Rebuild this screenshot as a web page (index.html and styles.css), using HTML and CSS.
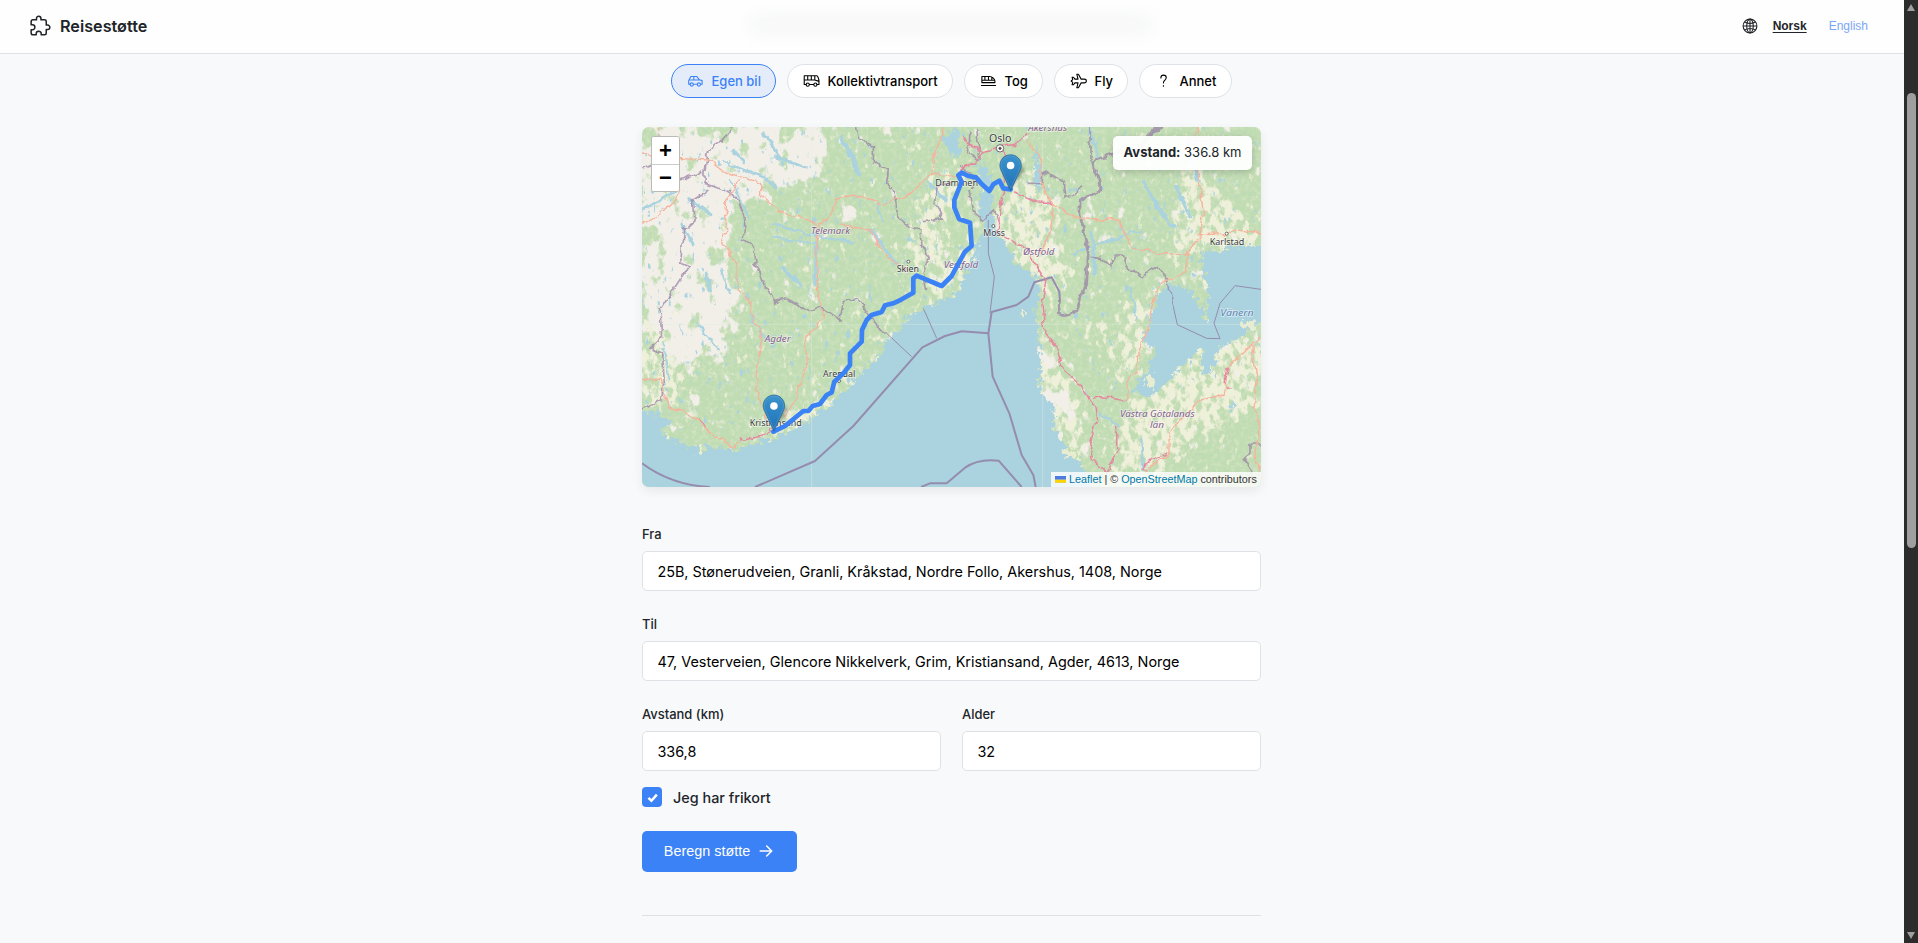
FILE: index.html
```html
<!DOCTYPE html>
<html lang="no">
<head>
<meta charset="utf-8">
<title>Reisestøtte</title>
<link rel="stylesheet" href="styles.css">
</head>
<body>
<div class="page">
  <header class="header">
    <div class="header-haze"></div>
    <div class="brand">
      <svg class="brand-icon" viewBox="0 0 512 512"><path d="M413.66 246.1H386a2 2 0 01-2-2v-77.24A38.86 38.86 0 00345.14 128H267.9a2 2 0 01-2-2V98.34c0-27.14-21.5-49.86-48.64-50.33a49.53 49.53 0 00-50.4 49.51V126a2 2 0 01-2 2H87.62A39.74 39.74 0 0048 167.62V238a2 2 0 002 2h26.91c29.37 0 53.68 25.48 54.09 54.85.42 29.87-23.51 57.15-53.29 57.15H50a2 2 0 00-2 2v70.38A39.74 39.74 0 0087.62 464H158a2 2 0 002-2v-20.93c0-30.28 24.75-56.35 55-57.06 30.1-.7 57 20.31 57 50.28V462a2 2 0 002 2h71.14A38.86 38.86 0 00384 425.14v-78a2 2 0 012-2h28.48c27.63 0 49.52-22.67 49.52-50.4s-23.2-48.64-50.34-48.64z"/></svg>
      <span class="brand-name">Reisestøtte</span>
    </div>
    <nav class="languages">
      <svg class="globe" viewBox="0 0 16 16"><circle cx="8" cy="8" r="6.9"/><ellipse cx="8" cy="8" rx="3.3" ry="6.9"/><path d="M8 1v14M1 8h14M2.6 4.1c3 1.6 7.800 1.600 10.800 0M2.600 11.900c3-1.600 7.800-1.600 10.800 0"/></svg>
      <a class="lang lang-active">Norsk</a>
      <a class="lang">English</a>
    </nav>
  </header>

  <main class="content">
    <div class="chips">
      <button class="chip chip-active"><svg class="chip-icon" viewBox="0 0 18 16"><path d="M3.200 11.500H1.800V7.800L4 3.200h6.200l3 3.500 2.800.9v3.900h-1.600M6.800 11.500h4M2 7h11M7.200 3.200V7"/><circle cx="5" cy="11.700" r="1.700"/><circle cx="12.600" cy="11.700" r="1.700"/></svg>Egen bil</button>
      <button class="chip chip-bus"><svg class="chip-icon" viewBox="0 0 18 16"><path d="M3.200 11.700H1.300V2.500h13.300c1 0 2.300 3.600 2.300 5.500v3.700h-2M6.800 11.700h4.500M1.300 7h11.200M5 2.500V7M8.800 2.500V7M12.500 2.500V7l4.300 1.400"/><circle cx="5" cy="11.900" r="1.700"/><circle cx="13.100" cy="11.900" r="1.700"/></svg>Kollektivtransport</button>
      <button class="chip chip-train"><svg class="chip-icon" viewBox="0 0 18 16"><path d="M2 3.200h8.200c3 0 5.600 2.800 5.600 5v1.500H2M2 3.200v4h12.500M2 9.700V7.200M1.500 12.800h15M5.200 3.200v4M9 3.200v4M12.500 4v3"/></svg>Tog</button>
      <button class="chip chip-plane"><svg class="chip-icon" viewBox="0 0 18 16"><path d="M7.200.8h1.700l2.900 5.200h3.200c1.500 0 2.300.9 2.300 2s-.8 2-2.300 2h-3.200l-2.900 5.200H7.200L8.500 10H5.200l-1.500 2H2.200l.7-2.600L1.200 8l1.700-1.400L2.200 4h1.500l1.500 2h3.300z"/></svg>Fly</button>
      <button class="chip chip-other"><svg class="chip-icon" viewBox="0 0 18 16"><path d="M6.200 4.800C6.200 2.600 7.300 1.800 9 1.800s2.900 1.100 2.900 2.700c0 2.500-3 2.500-3 5.500M8.900 12.900v.6"/></svg>Annet</button>
    </div>

    <section class="map">
      <svg class="map-canvas" viewBox="6 21 1857 1080" preserveAspectRatio="none">
        <defs>
          <filter id="bare" x="0" y="0" width="1900" height="1120" filterUnits="userSpaceOnUse" color-interpolation-filters="sRGB">
            <feGaussianBlur in="SourceAlpha" stdDeviation="32" result="area"/>
            <feTurbulence type="fractalNoise" baseFrequency=".022 .016" numOctaves="5" seed="7"/>
            <feColorMatrix values="0 0 0 0 0 0 0 0 0 0 0 0 0 0 0 1 0 0 0 0" result="noise"/>
            <feComposite in="noise" in2="area" operator="arithmetic" k2="1" k3=".4" k4="0"/>
            <feComponentTransfer result="mask"><feFuncA type="linear" slope="10" intercept="-7"/></feComponentTransfer>
            <feFlood flood-color="#f2efe9"/><feComposite in2="mask" operator="in"/>
          </filter>
          <filter id="fields" x="0" y="0" width="1900" height="1120" filterUnits="userSpaceOnUse" color-interpolation-filters="sRGB">
            <feGaussianBlur in="SourceAlpha" stdDeviation="22" result="area"/>
            <feTurbulence type="fractalNoise" baseFrequency=".045 .03" numOctaves="4" seed="21"/>
            <feColorMatrix values="0 0 0 0 0 0 0 0 0 0 0 0 0 0 0 1 0 0 0 0" result="noise"/>
            <feComposite in="noise" in2="area" operator="arithmetic" k2="1" k3=".3" k4="0"/>
            <feComponentTransfer result="mask"><feFuncA type="linear" slope="6" intercept="-3.950"/></feComponentTransfer>
            <feFlood flood-color="#eff0d9"/><feComposite in2="mask" operator="in"/>
          </filter>
          <filter id="ponds" x="0" y="0" width="1900" height="1120" filterUnits="userSpaceOnUse" color-interpolation-filters="sRGB">
            <feTurbulence type="fractalNoise" baseFrequency=".06 .035" numOctaves="3" seed="4"/>
            <feColorMatrix values="0 0 0 0 .667 0 0 0 0 .827 0 0 0 0 .875 9 0 0 0 -6.200"/>
            <feComposite in2="SourceAlpha" operator="in"/>
          </filter>
          <filter id="grain" x="0" y="0" width="1900" height="1120" filterUnits="userSpaceOnUse" color-interpolation-filters="sRGB">
            <feTurbulence type="fractalNoise" baseFrequency=".07" numOctaves="4" seed="12"/>
            <feColorMatrix values="0 0 0 0 .88 0 0 0 0 .91 0 0 0 0 .81 2.400 0 0 0 -1"/>
          </filter>
          <filter id="shore" x="-60" y="-60" width="2000" height="1240" filterUnits="userSpaceOnUse" color-interpolation-filters="sRGB">
            <feTurbulence type="fractalNoise" baseFrequency=".06" numOctaves="4" seed="9"/>
            <feDisplacementMap in="SourceGraphic" scale="42" xChannelSelector="R" yChannelSelector="G"/>
          </filter>
          <filter id="wobble" x="-60" y="-60" width="2000" height="1240" filterUnits="userSpaceOnUse" color-interpolation-filters="sRGB">
            <feTurbulence type="fractalNoise" baseFrequency=".035" numOctaves="3" seed="3"/>
            <feDisplacementMap in="SourceGraphic" scale="22" xChannelSelector="R" yChannelSelector="G"/>
          </filter>
          <filter id="soft"><feGaussianBlur stdDeviation="1.700"/></filter>
          <linearGradient id="pinFill" x1="0" y1="0" x2="0" y2="1"><stop offset="0" stop-color="#3b93cc"/><stop offset="1" stop-color="#1f72b8"/></linearGradient>
          <g id="pin">
            <path d="M12 39 25 22c4-4 3-9-2-9-5 1-8 12-11 26z" fill="#222" opacity=".32" filter="url(#soft)"/>
            <path d="M12.500.5C5.900.5.6 5.800.6 12.400c0 2.300.9 4.500 1.900 6.700l10 21.400 10-21.400c1-2.200 1.900-4.400 1.900-6.700C24.400 5.800 19.100.5 12.500.5z" fill="url(#pinFill)" stroke="#2e6c97" stroke-width=".9"/>
            <path d="M12.500 1.700C6.600 1.700 1.800 6.500 1.800 12.400c0 2 .9 4.200 1.800 6.200l8.900 19 8.900-19c.9-2 1.800-4.200 1.800-6.200 0-5.900-4.800-10.700-10.700-10.700z" fill="none" stroke="#fff" stroke-opacity=".13"/>
            <circle cx="12.500" cy="12.500" r="4.200" fill="#fff"/>
          </g>
        </defs>

        <rect width="1870" height="1110" fill="#bfdcb2"/>
        <rect width="1870" height="1110" filter="url(#grain)" opacity=".55"/>
        <g filter="url(#fields)">
          <path d="M985 380 1110 210 1180 130 1250 230 1240 350 1320 470 1210 540 1090 360 950 500 850 545 820 500z"/>
          <path d="M1640 60 1700 170 1790 270 1863 330 1863 400 1660 390 1560 470 1590 400z"/>
          <path d="M1200 590 1260 760 1340 870 1310 1060 1190 820z"/>
          <path d="M1500 820 1600 730 1700 680 1863 620 1863 860 1700 940 1500 1100 1400 1000z"/>
          <path d="M1700 400h80v240h-100zM1440 560l120-40-60 220-70 80z"/>
          <path d="M6 560h120l40 60-60 250-100-20zM1310 570l110 90-20 60zM380 900l200-70 90-90 110-160 30 10-160 240-250 160z"/>
          <path d="M800 420l50-200 80-90 30 40-60 280z"/>
        </g>
        <g filter="url(#bare)">
          <path d="M6 21h580l20 60-90 80 40 40-180 10-70 40-20 80-60 60 40 60-60 100-110 170-90-60z"/>
          <path d="M80 520l190-60 30 130-60 160-120-20-40-120z"/>
          <path d="M60 60h480v60H60zM590 260h70v40h-70z"/>
          <path d="M1195 600l50 190 80 30-70 150-70-180zM60 900h60v40H60z"/>
        </g>
        <rect width="1200" height="930" filter="url(#ponds)"/>
        <path d="M1160 21h703v800h-560z" filter="url(#ponds)"/>

        <g filter="url(#shore)" fill="#aad3df">
          <path d="M-40 865 75 885 95 905 55 940 100 960 175 985 185 1000 200 980 285 990 335 975 400 955 445 935 510 900 570 855 610 820 655 770 705 720 745 660 800 600 840 570 890 550 940 530 960 500 985 450 1005 400 1020 345 1040 325 1020 290 1018 240 1030 200 1010 140 1030 130 1050 160 1055 240 1060 300 1075 345 1110 390 1120 430 1180 460 1205 520 1180 570 1195 610 1195 660 1205 740 1200 820 1240 850 1240 920 1280 980 1330 1040 1370 1150H-40z"/>
          <path d="M1680 395 1740 390 1800 375 1900 375V600L1863 610 1800 650 1735 690 1715 755 1680 765 1690 680 1640 725 1570 795 1530 830 1475 815 1530 740 1550 690 1510 670 1520 620 1545 555 1565 520 1590 485 1650 510 1670 545 1705 610 1705 520z"/>
          <path d="M905 60 960 20V110L935 105zM1180 90 1210 150 1200 220 1185 200zM1785 830l-15 30 10 10z"/>
        </g>
        <g filter="url(#wobble)" fill="none" stroke="#aad3df" stroke-linecap="round">
          <path stroke-width="11" d="M375 45 425 120 500 140M605 50 660 165M405 110 460 130M380 180 410 200M280 90 310 125M1510 180 1550 260 1600 320M1610 200 1650 290M1655 100 1670 180M1350 25 1375 110M1355 340 1365 460M865 190 920 240M690 330 770 430M530 380 525 500M430 440 480 500M200 460 210 510M130 320 155 370M150 240 210 280"/>
          <path stroke-width="7" d="M400 310 520 345 640 370M395 355 530 370M710 250 730 300M245 125 380 175M6 270 105 210M1300 400 1500 330M1740 500 1750 610M1470 500 1490 600M70 690 90 780M330 590 400 680M170 610 240 690M1500 960 1510 1050M1380 880l60 40M270 180l60 120M240 450l30 70"/>
        </g>
        <g filter="url(#shore)" fill="#e8ecd0"><ellipse cx="1825" cy="615" rx="25" ry="12"/><ellipse cx="1150" cy="578" rx="5" ry="7"/><ellipse cx="1530" cy="785" rx="12" ry="20"/><ellipse cx="180" cy="992" rx="10" ry="16"/><ellipse cx="1290" cy="1000" rx="22" ry="15"/></g>

        <g stroke="#e4e9df" stroke-opacity=".65" stroke-width="2"><path d="M6 613H1863M515 21V1101M1208 21V1101"/></g>

        <g fill="none" stroke="#9b83a5" stroke-opacity=".75" stroke-width="5" filter="url(#wobble)">
          <path d="M275 21 265 45 240 60 205 95 195 150 195 190 265 215 295 240 315 300 310 360 340 380 345 430 375 500 405 545 440 535 510 575 540 560 600 600 610 545 650 530 680 575 700 600 720 630 740 640"/>
          <path d="M6 148 55 130 110 185 190 150M205 210 160 240 165 300 130 330 122 430 145 440 60 570 65 650 30 685 65 705 70 790 65 840 6 870"/>
          <path d="M650 21 655 55 700 80 700 125 745 150 740 190 760 210 775 290 810 325 845 330 845 380 865 410 850 460 860 510M845 305 910 300 885 250 895 200 930 190M960 140 1000 170 1000 210M990 210 1000 270 1030 300 1060 270 1075 300M990 40 985 100 1020 120 1010 30M1160 190 1205 190 1210 155 1270 190 1275 235 1330 200"/>
          <path stroke-width="8" d="M1570 21 1540 30 1490 95 1430 100 1355 125 1375 170 1380 210 1320 240 1320 280 1335 350 1345 400 1340 490 1320 540 1310 575 1280 585 1258 575 1258 540"/>
          <path d="M1350 21v100M1350 412 1385 415 1415 440 1420 405 1450 405 1460 435 1505 470 1550 440 1580 470 1600 560"/>
          <path d="M1863 972 1830 972 1830 1000 1810 1015 1835 1050 1830 1085"/>
        </g>
        <g fill="none" stroke="#958cae" stroke-width="6" stroke-linejoin="round">
          <path d="M6 1030C60 1070 130 1098 210 1101M345 1101 525 1023 640 918 847 682 915 648 965 634 1045 640 1055 576 1130 555 1165 530 1183 487 1235 472 1258 515 1260 545"/>
          <path d="M1045 640 1058 770 1108 880 1145 1005 1180 1065 1187 1101M843 1101 870 1090 920 1090 975 1043Q1015 1015 1076 1022L1145 1101"/>
          <path stroke-width="3" d="M850 565 890 655M740 640 815 710M1050 580 1063 470 1045 400 1045 300M1600 560 1612 614 1700 655 1740 656 1722 610 1740 550 1785 497 1863 508"/>
        </g>

        <g fill="none" stroke="#f6b39c" stroke-width="4" stroke-linejoin="round" filter="url(#wobble)">
          <path d="M6 105 110 115 205 120 250 155 300 170 365 190 365 225 410 265 455 290 510 300 530 320 570 290 590 240 640 225 700 245 720 255 770 235 810 225 850 185 875 160 880 120 895 65 910 21"/>
          <path d="M875 160 950 170M600 315 690 330 730 400 805 460M535 320 530 400 535 450 535 530 550 590 495 660 505 720 470 830 430 900M300 175 270 225 255 260 260 330 245 370 290 430 295 510 325 540 330 580 365 640 355 700 350 810 370 860 380 920M6 310 60 285 105 240 120 205M6 778 60 775 85 860 120 870 165 895 210 940 280 980 300 965"/>
          <path d="M1235 250 1300 290 1350 295 1430 300 1460 350 1480 385 1560 400 1635 405 1680 350 1690 280 1680 200 1665 100 1670 21M1680 345 1760 340 1800 325 1863 342M1640 400 1640 455 1560 490 1535 560 1520 640 1495 690 1490 750 1460 780 1465 840M1160 60 1205 120 1200 180 1240 260 1230 340 1200 400M1510 1050 1590 1000 1590 940 1650 870 1680 840 1750 825 1765 740 1863 650M1835 680 1850 770 1840 850 1860 920 1845 1010 1863 1080M55 21v90"/>
        </g>
        <g fill="none" stroke="#e588a0" stroke-width="4.500" stroke-linejoin="round" filter="url(#wobble)">
          <path d="M965 155 975 135 1010 125 1030 95 985 75 970 50M1030 95 1075 85 1125 75 1165 40M1090 90 1090 215 1070 340 1110 355 1160 390 1215 480 1205 540 1215 640 1250 680 1265 740 1310 780 1365 860 1370 900 1350 960 1360 1020 1400 1060 1430 1000 1430 920M1120 215 1200 250 1240 250M1360 830 1390 830 1440 840 1460 838M1510 1050 1515 1030 1580 1000M1755 810 1775 810M1755 790 1765 740M300 960 370 945 400 925M175 900 195 920"/>
        </g>

        <g class="place">
          <text x="1047" y="65" textLength="67" lengthAdjust="spacingAndGlyphs" font-size="32">Oslo</text>
          <text x="886" y="197" textLength="128" lengthAdjust="spacingAndGlyphs">Drammen</text>
          <text x="1030" y="347" textLength="65" lengthAdjust="spacingAndGlyphs">Moss</text>
          <text x="770" y="457" textLength="67" lengthAdjust="spacingAndGlyphs">Skien</text>
          <text x="1709" y="374" textLength="104" lengthAdjust="spacingAndGlyphs">Karlstad</text>
          <text x="549" y="771" textLength="97" lengthAdjust="spacingAndGlyphs">Arendal</text>
          <text x="329" y="918" textLength="156" lengthAdjust="spacingAndGlyphs">Kristiansand</text>
        </g>
        <g fill="#fff" stroke="#555" stroke-width="2.500"><circle cx="805" cy="425" r="4.500"/><circle cx="1060" cy="318" r="4.500"/><circle cx="1760" cy="341" r="4.500"/><circle cx="597" cy="783" r="4.500"/><circle cx="1080" cy="85" r="11"/><circle cx="1080" cy="85" r="3.500" fill="#444"/></g>
        <g class="region">
          <text x="1165" y="34" textLength="117" lengthAdjust="spacingAndGlyphs">Akershus</text>
          <text x="1637" y="76" textLength="140" lengthAdjust="spacingAndGlyphs">Värmlands</text>
          <text x="513" y="341" textLength="117" lengthAdjust="spacingAndGlyphs">Telemark</text>
          <text x="1149" y="404" textLength="94" lengthAdjust="spacingAndGlyphs">Østfold</text>
          <text x="911" y="443" textLength="104" lengthAdjust="spacingAndGlyphs">Vestfold</text>
          <text x="374" y="666" textLength="78" lengthAdjust="spacingAndGlyphs">Agder</text>
          <text x="1440" y="890" textLength="224" lengthAdjust="spacingAndGlyphs">Västra Götalands</text>
          <text x="1530" y="925" textLength="42" lengthAdjust="spacingAndGlyphs">län</text>
          <text class="lake" x="1741" y="587" textLength="100" lengthAdjust="spacingAndGlyphs">Vänern</text>
        </g>

        <path d="M400 935 435 918 490 873 505 873 518 858 540 852 560 825 575 817 583 785 610 760 630 735V700L665 665 666 630 680 600 695 585 725 576 735 556 760 550 785 538 820 518V475L830 467 905 498 935 468 950 440 975 395 995 378 990 308 957 297 943 262V240L955 210 965 185 955 166 965 158 985 168 1008 172 1025 192 1048 213 1060 193 1078 182 1090 205 1112 208" fill="none" stroke="#3b82f6" stroke-width="14" stroke-linejoin="round" stroke-linecap="round"/>
        <use href="#pin" transform="translate(1078 103) scale(2.700)"/>
        <use href="#pin" transform="translate(368 824) scale(2.700)"/>
      </svg>
      <div class="zoom-control"><button class="zoom-button">+</button><button class="zoom-button">−</button></div>
      <div class="distance"><b>Avstand:</b> 336.8 km</div>
      <div class="attribution"><svg class="flag" viewBox="0 0 12 8"><path fill="#4c7be1" d="M0 0h12v4H0z"/><path fill="#ffd500" d="M0 4h12v3H0z"/><path fill="#e0bc00" d="M0 7h12v1H0z"/></svg> <a>Leaflet</a> | © <a>OpenStreetMap</a> contributors</div>
    </section>

    <form class="form">
      <label class="field"><span class="label">Fra</span><input class="input" value="25B, Stønerudveien, Granli, Kråkstad, Nordre Follo, Akershus, 1408, Norge"></label>
      <label class="field"><span class="label">Til</span><input class="input" value="47, Vesterveien, Glencore Nikkelverk, Grim, Kristiansand, Agder, 4613, Norge"></label>
      <div class="row">
        <label class="field"><span class="label">Avstand (km)</span><input class="input" value="336,8"></label>
        <label class="field"><span class="label">Alder</span><input class="input" value="32"></label>
      </div>
      <div class="check"><span class="box"><svg class="tick" viewBox="0 0 12 12"><path d="M2.200 6.400 5 9l5-5.600"/></svg></span>Jeg har frikort</div>
      <button class="submit" type="button">Beregn støtte<svg class="arrow" viewBox="0 0 14 14"><path d="M1.200 7h11.300M7.700 2l5 5-5 5"/></svg></button>
    </form>
    <hr class="divider">
  </main>
</div>
<aside class="scrollbar"><i class="scroll-up"></i><i class="scroll-thumb"></i><i class="scroll-down"></i></aside>
</body>
</html>
```
FILE: styles.css
```css
* { box-sizing: border-box; }
body { margin: 0; height: 943px; display: flex; overflow: hidden; background: #f8f9fb; color: #212529; font-family: Inter, sans-serif; }
.page { flex: 1; }
button, input { font-family: inherit; margin: 0; }

.header { position: relative; height: 54px; display: flex; align-items: center; justify-content: space-between; padding: 0 36px 2px 29px; background: #fefefe; border-bottom: 1px solid #dee2e6; overflow: hidden; }
.header-haze { position: absolute; left: 750px; top: 18px; width: 402px; height: 13px; border-radius: 6px; background: #f3f4f4; filter: blur(9px); }
.brand { display: flex; align-items: center; gap: 8px; }
.brand-icon { width: 23px; height: 23px; fill: none; stroke: #212529; stroke-width: 34; stroke-linejoin: round; }
.brand-name { font-size: 16.2px; font-weight: 600; line-height: 20px; }
.languages { display: flex; align-items: center; font-family: "Liberation Sans", Arial, sans-serif; font-size: 12px; }
.globe { width: 16px; height: 16px; margin-right: 15px; fill: none; stroke: #212529; stroke-width: 1.1; }
.lang { color: #7aa7f8; }
.lang-active { color: #212529; font-weight: 700; text-decoration: underline; text-underline-offset: 2px; margin-right: 22px; }

.content { width: 619px; margin: 0 auto; padding-top: 10px; position: relative; left: -.5px; }
.chips { display: flex; justify-content: center; gap: 11px; }
.chip { width: 105px; height: 34px; display: flex; align-items: center; justify-content: flex-start; gap: 7.5px; padding: 0 0 0 15px; border: 1px solid #dee2e6; border-radius: 17px; background: #fff; color: #000; font-size: 13px; font-weight: 500; white-space: nowrap; }
.chip-active { background: #e4ecfa; border-color: #3b82f6; color: #3b82f6; }
.chip-bus { width: 166px; }
.chip-train { width: 79px; }
.chip-plane { width: 74px; }
.chip-other { width: 93px; }
.chip-icon { width: 17px; height: 16px; fill: none; stroke: currentColor; stroke-width: 1.15; stroke-linecap: round; stroke-linejoin: round; flex: none; }

.map { position: relative; height: 360px; margin-top: 29px; border-radius: 7px; overflow: hidden; box-shadow: 0 4px 11px rgba(0, 0, 0, .07); }
.map-canvas { display: block; width: 619px; height: 360px; }
.place { font: 26px "Noto Sans", sans-serif; fill: #3c3c40; stroke: #fff; stroke-opacity: .6; stroke-width: 4; paint-order: stroke; }
.region { font: italic 27px "Noto Sans", sans-serif; fill: #86608f; stroke: #fff; stroke-opacity: .55; stroke-width: 4; paint-order: stroke; }
.lake { fill: #5d86b3; }
.zoom-control { position: absolute; left: 9px; top: 9px; width: 29px; border: 1px solid #b9bbb6; border-radius: 3px; background: #fff; overflow: hidden; }
.zoom-button { display: block; width: 27px; height: 27px; padding: 0; border: 0; background: #fff; color: #000; font: bold 22px/27px "Liberation Sans", Arial, sans-serif; }
.zoom-button + .zoom-button { border-top: 1px solid #ccc; line-height: 24px; }
.distance { position: absolute; right: 9px; top: 9px; width: 139px; height: 34px; border-radius: 5px; background: rgba(255, 255, 255, .95); box-shadow: 0 2px 7px rgba(0, 0, 0, .18); font-size: 13px; line-height: 33px; text-align: center; white-space: nowrap; }
.distance b { font-weight: 650; }
.attribution { position: absolute; right: 0; bottom: 0; width: 210px; height: 15px; padding-left: 4px; background: rgba(255, 255, 255, .8); color: #333; font: 10.8px/15px "Liberation Sans", Arial, sans-serif; white-space: nowrap; }
.attribution a { color: #0078a8; }
.flag { width: 11px; height: 7.5px; }

.form { display: flex; flex-direction: column; margin-top: 37px; }
.field { display: flex; flex-direction: column; gap: 7px; margin-bottom: 23px; min-width: 0; flex: 1; }
.label { font-size: 12.96px; font-weight: 450; line-height: 20px; }
.input { width: 100%; height: 40px; padding: 0 14.4px; border: 1px solid #dee2e6; border-radius: 5px; background: #fff; color: #000; font-size: 14.4px; outline: 0; }
.row { display: flex; gap: 21px; }
.row .field { margin-bottom: 16px; }
.check { display: flex; align-items: center; gap: 11px; height: 20px; font-size: 14.4px; font-weight: 500; }
.box { width: 20px; height: 20px; display: grid; place-items: center; border-radius: 4px; background: #3b82f6; }
.tick { width: 13px; height: 13px; fill: none; stroke: #fff; stroke-width: 2.3; }
.submit { width: 155px; height: 41px; margin-top: 24px; padding: 0 2px 2px 0; display: flex; align-items: center; justify-content: center; gap: 9px; border: 0; border-radius: 5px; background: #3b82f6; color: #fff; font: 14.4px "Liberation Sans", Arial, sans-serif; }
.arrow { width: 14px; height: 14px; fill: none; stroke: #fff; stroke-width: 1.5; stroke-linecap: round; stroke-linejoin: round; }
.divider { height: 1px; margin: 43px 0 0; border: 0; background: #dee2e6; }

.scrollbar { width: 14px; height: 943px; display: flex; flex-direction: column; align-items: center; padding: 4px 0; background: #2c2c2c; }
.scroll-up { border: 4.5px solid transparent; border-top: 0; border-bottom: 7px solid #9f9f9f; }
.scroll-thumb { width: 9px; height: 455px; margin-top: 82px; border-radius: 5px; background: #9f9f9f; }
.scroll-down { margin-top: auto; border: 4.5px solid transparent; border-bottom: 0; border-top: 7px solid #9f9f9f; }
```
